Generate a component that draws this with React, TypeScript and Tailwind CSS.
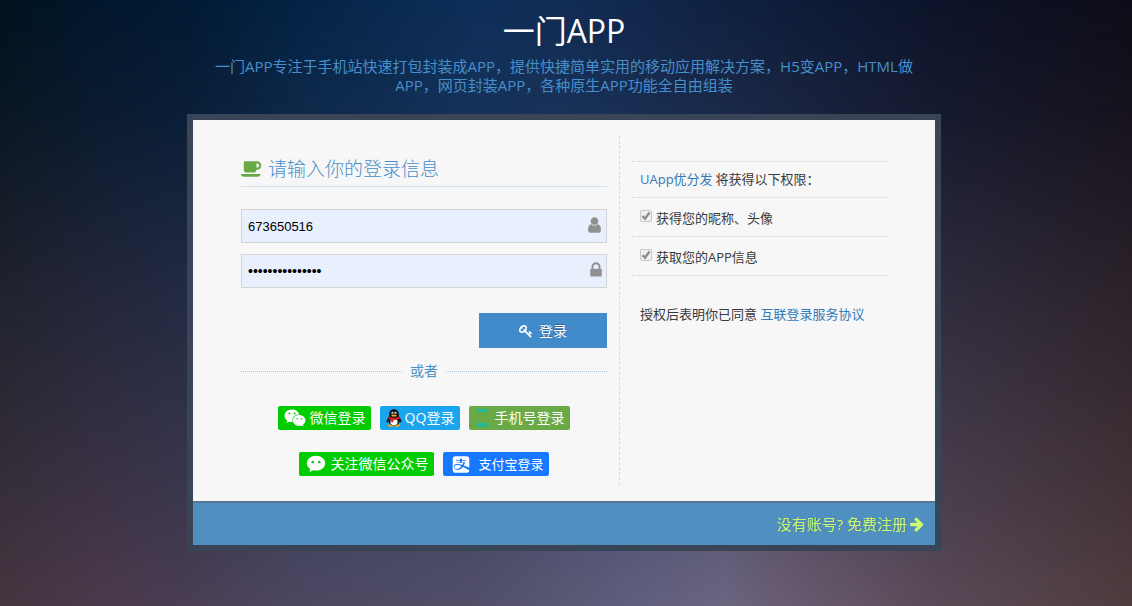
import { useState } from "react";
import type { ReactNode } from "react";
import { FaAlipay, FaWeixin } from "react-icons/fa";

const font = "font-['Open_Sans','Noto_Sans_CJK_SC',sans-serif]";

// Night sky: a dusk row along the bottom, with a dark blue row fading out over it
const dusk =
  "bg-[linear-gradient(90deg,#453640_0%,#4c3a4c_9%,#4a3f55_17%,#4d4862_27%,#524f69_42%,#605f7e_56%,#6b6580_64%,#695b70_70%,#5a4a57_83%,#4f3c3f_100%)]";
const night =
  "bg-[linear-gradient(90deg,#01121f_0%,#01162b_8%,#011a34_17%,#042446_27%,#0d2e58_42%,#102c54_50%,#0f2243_62%,#0c1329_83%,#0e0c18_100%)] [mask-image:linear-gradient(180deg,#000_0%,rgba(0,0,0,0.88)_18%,rgba(0,0,0,0.53)_50%,rgba(0,0,0,0.2)_82%,transparent_100%)]";

// Font Awesome 4 glyphs, 1792 units to the em
const glyphs = {
  coffee: {
    w: 1920,
    d: "M1664 576q0-80-56-136t-136-56h-64v384h64q80 0 136-56t56-136zm-1664 768h1792q0 106-75 181t-181 75h-1280q-106 0-181-75t-75-181zm1856-768q0 159-112.500 271.500t-271.500 112.500h-64v32q0 92-66 158t-158 66h-704q-92 0-158-66t-66-158v-736q0-26 19-45t45-19h1152q159 0 271.500 112.500t112.500 271.500z",
  },
  user: {
    w: 1280,
    d: "M1280 1399q0 109-62.500 187t-150.500 78h-854q-88 0-150.500-78t-62.500-187q0-85 8.500-160.500t31.500-152 58.500-131 94-89 134.500-34.500q131 128 313 128t313-128q76 0 134.500 34.500t94 89 58.500 131 31.500 152 8.500 160.500zm-256-887q0 159-112.500 271.500t-271.500 112.500-271.500-112.500-112.500-271.500 112.500-271.500 271.500-112.500 271.500 112.500 112.500 271.500z",
  },
  lock: {
    w: 1152,
    d: "M320 768h512v-192q0-106-75-181t-181-75-181 75-75 181v192zm832 96v576q0 40-28 68t-68 28h-960q-40 0-68-28t-28-68v-576q0-40 28-68t68-28h32v-192q0-184 132-316t316-132 316 132 132 316v192h32q40 0 68 28t28 68z",
  },
  key: {
    w: 1792,
    d: "M832 512q0-80-56-136t-136-56-136 56-56 136q0 42 19 83-41-19-83-19-80 0-136 56t-56 136 56 136 136 56 136-56 56-136q0-42-19-83 41 19 83 19 80 0 136-56t56-136zm851 704q0 17-49 66t-66 49q-9 0-28.500-16t-36.500-33-38.500-40-24.500-26l-96 96 220 220q28 28 28 68 0 42-39 81t-81 39q-40 0-68-28l-671-671q-176 131-365 131-163 0-265.500-102.500t-102.500-265.500q0-160 95-313t248-248 313-95q163 0 265.500 102.500t102.500 265.500q0 189-131 365l355 355 96-96q-3-3-26-24.500t-40-38.500-33-36.500-16-28.500q0-17 49-66t66-49q13 0 23 10 6 6 46 44.500t82 79.500 86.500 86 73 78 28.500 41z",
  },
  arrow: {
    w: 1536,
    d: "M1472 960q0 54-37 91l-651 651q-39 37-91 37-51 0-90-37l-75-75q-38-38-38-91t38-91l293-293h-704q-52 0-84.500-37.500t-32.500-90.500v-128q0-53 32.500-90.500t84.500-37.500h704l-293-294q-38-36-38-90t38-90l75-75q38-38 90-38 53 0 91 38l651 651q37 35 37 90z",
  },
};

function Glyph({ name, className }: { name: keyof typeof glyphs; className: string }) {
  const g = glyphs[name];
  return (
    <svg viewBox={`0 0 ${g.w} 1792`} fill="currentColor" aria-hidden="true" className={className}>
      <path d={g.d} />
    </svg>
  );
}

function Penguin() {
  return (
    <svg viewBox="0 0 16 18" aria-hidden="true" className="h-[18px] w-4">
      <ellipse cx="5" cy="16.400" rx="3" ry="1.300" fill="#f5a623" />
      <ellipse cx="11" cy="16.400" rx="3" ry="1.300" fill="#f5a623" />
      <path d="M8 0.300C4.900 0.300 3.200 2.500 3.200 5.200v2C2 8.700.4 11 .5 12.800c.1 1 .9.700 1.800-.6.4 2.500 2.400 4.400 5.700 4.400s5.300-1.900 5.700-4.400c.9 1.300 1.700 1.600 1.800.6.1-1.800-1.500-4.100-2.700-5.600v-2C12.800 2.500 11.100.3 8 .3z" fill="#111" />
      <ellipse cx="8" cy="13" rx="3.600" ry="3.200" fill="#fff" />
      <ellipse cx="6.500" cy="4.100" rx="1" ry="1.400" fill="#fff" />
      <ellipse cx="9.500" cy="4.100" rx="1" ry="1.400" fill="#fff" />
      <circle cx="6.700" cy="4.300" r=".5" fill="#111" />
      <circle cx="9.300" cy="4.300" r=".5" fill="#111" />
      <ellipse cx="8" cy="6.700" rx="2.800" ry=".9" fill="#f5a623" />
      <path d="M2.800 7.600c3 1.700 7.400 1.700 10.400 0l.5 2c-2 1.100-4 1.500-6.200 1.500l-.2 2.400-2.300-.4.200-2.200-2.800-1.200z" fill="#d8202a" />
    </svg>
  );
}

function Phone() {
  return (
    <svg viewBox="0 0 11 18" aria-hidden="true" className="h-[18px] w-[11px] shrink-0">
      <rect width="11" height="18" rx="2" fill="#12bda6" />
      <rect x="1" y="3" width="9" height="11" fill="#69aa46" />
      <path d="M4 1.500h3" stroke="#69aa46" />
      <circle cx="5.500" cy="16" r="1" fill="#69aa46" />
    </svg>
  );
}

function Bubble() {
  return (
    <svg viewBox="0 0 20 18" aria-hidden="true" className="h-[18px] w-5">
      <path d="M10 .8C4.800.8.800 4 .8 8.200c0 2.400 1.300 4.400 3.300 5.700l-.6 3.300 3.600-2c.9.200 1.900.4 2.900.4 5.200 0 9.200-3.200 9.200-7.400S15.200.8 10 .8z" fill="#fff" />
      <circle cx="6.700" cy="7" r="1.300" fill="#0c0" />
      <circle cx="13.300" cy="7" r="1.300" fill="#0c0" />
    </svg>
  );
}

function SocialButton({ className, icon, children }: { className: string; icon: ReactNode; children: ReactNode }) {
  return (
    <button type="button" className={`flex h-6 items-center rounded-xs text-white ${className}`}>
      {icon}
      {children}
    </button>
  );
}

function Permission({ children }: { children: ReactNode }) {
  return (
    <li className="border-b border-dotted border-[#d0d0d0]">
      <label className="flex h-[38px] items-center gap-1 px-2 pt-1">
        <span className="relative mb-1.5 block h-3 w-3">
          <input
            type="checkbox"
            checked
            disabled
            readOnly
            className="block h-3 w-3 appearance-none rounded-xs border border-[#c8c8c8] bg-[#f0f0f0]"
          />
          <svg viewBox="0 0 12 12" aria-hidden="true" className="pointer-events-none absolute inset-0">
            <path d="M2.500 6.200l2.500 2.500L9.500 2.500" fill="none" stroke="#8d8d8d" strokeWidth="2.400" />
          </svg>
        </span>
        {children}
      </label>
    </li>
  );
}

const inp =
  "h-[34px] w-full border border-[#d5d5d5] bg-[#e8f0fe] pl-1.5 pr-7 font-['Liberation_Sans',Arial,sans-serif] text-black outline-none focus:border-[#f59942]";

export default function App() {
  const [account, setAccount] = useState("673650516");
  const [password, setPassword] = useState("abcdefgh1234567");

  return (
    <div className={`relative isolate min-h-screen pr-1 text-[13px] text-[#393939] ${font} ${dusk}`}>
      <div aria-hidden="true" className={`absolute inset-0 -z-10 ${night}`} />
      <main className="mx-auto max-w-[754px]">
        <header className="px-3 pt-2 text-center">
          <h1 className="text-[32px] leading-[45px] text-white">一门APP</h1>
          <p className="mt-1 text-[15px] leading-[19px] text-[#478fca]">
            一门APP专注于手机站快速打包封装成APP，提供快捷简单实用的移动应用解决方案，H5变APP，HTML做APP，网页封装APP，各种原生APP功能全自由组装
          </p>
        </header>

        <div className="mt-[19px] border-[6px] border-[#394557]">
          <div className="grid grid-cols-[427fr_315fr] bg-[#f7f7f7] py-4">
            <form
              onSubmit={(e) => e.preventDefault()}
              className="border-r border-dashed border-[#d9d9d9] pb-[9px] pl-12 pr-3 pt-4"
            >
              <h2 className="flex h-[35px] items-center gap-1.5 border-b border-[#d0e1ee] text-[19px] font-light text-[#478fca]">
                <Glyph name="coffee" className="h-5 w-[21px] text-[#69aa46]" />
                请输入你的登录信息
              </h2>

              <div className="mt-[22px] flex flex-col gap-[11px]">
                <label className="relative block">
                  <input
                    aria-label="用户名"
                    value={account}
                    onChange={(e) => setAccount(e.target.value)}
                    className={`${inp} text-[13px]`}
                  />
                  <Glyph name="user" className="absolute right-1.5 top-[7px] h-[18px] w-[13px] text-[#909090]" />
                </label>
                <label className="relative block">
                  <input
                    type="password"
                    aria-label="密码"
                    value={password}
                    onChange={(e) => setPassword(e.target.value)}
                    className={`${inp} text-sm`}
                  />
                  <Glyph name="lock" className="absolute right-[5px] top-[7px] h-[18px] w-3 text-[#909090]" />
                </label>
              </div>

              <button className="ml-auto mt-[25px] flex h-[35px] w-[35%] items-center justify-center gap-1.5 bg-[#428bca] text-sm text-white [text-shadow:0_-1px_0_rgba(0,0,0,0.25)]">
                <Glyph name="key" className="h-3.5 w-3.5" />
                登录
              </button>

              <div className="mt-[11px] flex h-6 items-center gap-2 text-sm text-[#4c8fbd]">
                <span className="flex-1 border-t border-dotted border-[#a6c4db]" />
                或者
                <span className="flex-1 border-t border-dotted border-[#a6c4db]" />
              </div>

              <div className="mt-[23px] flex justify-center gap-[9px] text-sm">
                <SocialButton className="gap-1 bg-[#00cc00] pl-1.5 pr-[5px]" icon={<FaWeixin className="h-[22px] w-[22px]" />}>
                  微信登录
                </SocialButton>
                <SocialButton className="gap-[3px] bg-[#1aa5ee] px-1.5" icon={<Penguin />}>
                  QQ登录
                </SocialButton>
                <SocialButton className="gap-1.5 bg-[#69aa46] pl-2 pr-1.5" icon={<Phone />}>
                  手机号登录
                </SocialButton>
              </div>
              <div className="mt-[22px] flex justify-center gap-[9px] text-sm">
                <SocialButton className="gap-1 bg-[#00cc00] pl-[7px] pr-1.5" icon={<Bubble />}>
                  关注微信公众号
                </SocialButton>
                <SocialButton className="gap-2 bg-[#1677ff] pl-[9px] pr-[5px] text-[13px]" icon={<FaAlipay className="h-[19px] w-[18px]" />}>
                  支付宝登录
                </SocialButton>
              </div>
            </form>

            <section className="pl-3 pr-[47px] pt-[25px]">
              <ul className="border-t border-dotted border-[#d0d0d0]">
                <li className="flex h-9 items-center gap-[3px] border-b border-dotted border-[#d0d0d0] px-2">
                  <a href="#app" className="text-[#337ab7]">UApp优分发</a>
                  将获得以下权限：
                </li>
                <Permission>获得您的昵称、头像</Permission>
                <Permission>获取您的APP信息</Permission>
              </ul>
              <p className="mt-7 px-2 leading-5">
                授权后表明你已同意 <a href="#agreement" className="text-[#337ab7]">互联登录服务协议</a>
              </p>
            </section>
          </div>

          <div className="flex h-11 items-center justify-end border-t-2 border-[#597597] bg-[#5090c1] pr-[11px] text-[15px] text-[#cbfd6e]">
            <a href="#register" className="flex items-center gap-[3px] [text-shadow:1px_0_1px_rgba(0,0,0,0.25)]">
              没有账号? 免费注册
              <Glyph name="arrow" className="h-4 w-3.5" />
            </a>
          </div>
        </div>
      </main>
    </div>
  );
}
